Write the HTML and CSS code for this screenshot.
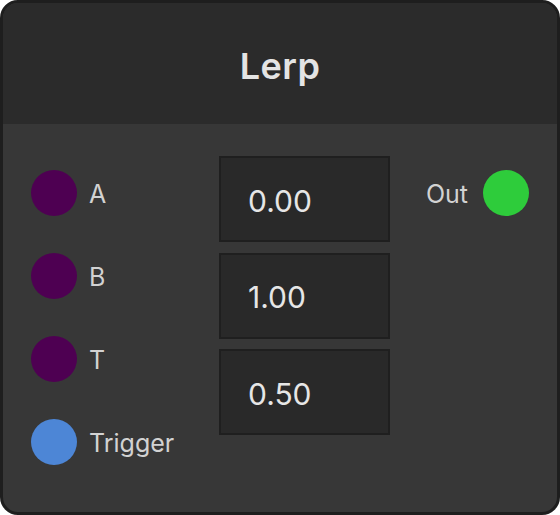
FILE: index.html
```html
<!DOCTYPE html>
<html lang="en">
  <head>
    <meta charset="UTF-8" />
    <meta name="viewport" content="width=device-width, initial-scale=1.0" />
    <title>Lerp Node</title>
    <link rel="stylesheet" href="styles.css">
  </head>
  <body>
    <div class="node">
      <div class="node-header">Lerp</div>
      <div class="node-body">
        <div class="port-list inputs">
          <div class="port">
            <div class="port-dot value"></div>
            <div class="port-label">A</div>
          </div>
          <div class="port">
            <div class="port-dot value"></div>
            <div class="port-label">B</div>
          </div>
          <div class="port">
            <div class="port-dot value"></div>
            <div class="port-label">T</div>
          </div>
          <div class="port">
            <div class="port-dot trigger"></div>
            <div class="port-label">Trigger</div>
          </div>
        </div>

        <div class="fields">
          <div class="field">0.00</div>
          <div class="field">1.00</div>
          <div class="field">0.50</div>
        </div>

        <div class="port-list outputs">
          <div class="port">
            <div class="port-label">Out</div>
            <div class="port-dot out"></div>
          </div>
        </div>
      </div>
    </div>
  </body>
</html>
```

FILE: styles.css
```css
* {
  margin: 0;
  padding: 0;
  box-sizing: border-box;
  font-family: Inter, "Noto Sans", sans-serif;
}

body {
  background-color: #ffffff;
}

.node {
  width: 560px;
  height: 515px;
  border: 3px solid #1e1e1e;
  border-radius: 18px;
  background-color: #373737;
  overflow: hidden;
}

.node-header {
  height: 121px;
  background-color: #2b2b2b;
  display: flex;
  justify-content: center;
  align-items: center;
  font-size: 36px;
  font-weight: 600;
  letter-spacing: 0.5px;
  color: #e4e4e4;
  padding-top: 4px;
}

.node-body {
  display: flex;
  padding: 32px 28px 0 28px;
}

.port-list {
  display: flex;
  flex-direction: column;
  gap: 37px;
  padding-top: 14px;
}

.inputs {
  width: 188px;
}

.outputs {
  flex: 1;
  align-items: flex-end;
}

.port {
  display: flex;
  align-items: center;
  gap: 12px;
  height: 46px;
}

.outputs .port {
  gap: 15px;
}

.port-dot {
  width: 46px;
  height: 46px;
  border-radius: 50%;
}

.port-dot.value {
  background-color: #4e0052;
}

.port-dot.trigger {
  background-color: #4d86d6;
}

.port-dot.out {
  background-color: #2ecc3b;
}

.port-label {
  font-size: 25px;
  color: #d2d2d2;
  padding-top: 2px;
}

.fields {
  width: 171px;
  display: flex;
  flex-direction: column;
  gap: 10.5px;
}

.field {
  height: 86px;
  background-color: #292929;
  border: 2px solid #1f1f1f;
  display: flex;
  align-items: center;
  padding-left: 27px;
  padding-top: 3px;
  font-size: 30px;
  color: #e6e6e6;
}
```
